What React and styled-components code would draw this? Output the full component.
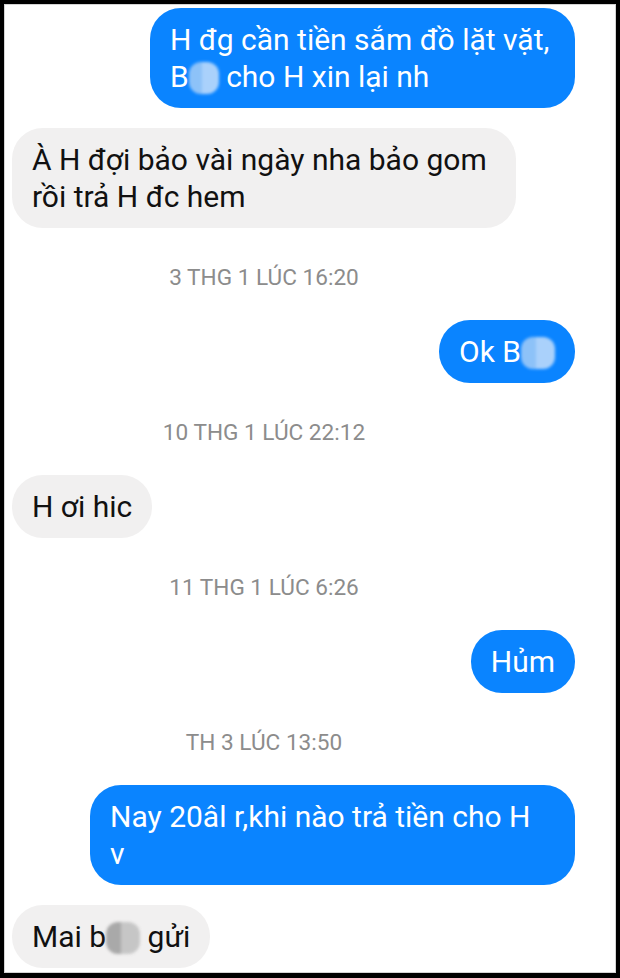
import React from "react";
import styled, { createGlobalStyle } from "styled-components";

const GlobalStyle = createGlobalStyle`
  html, body {
    margin: 0;
    padding: 0;
    background: #000;
  }
`;

const Frame = styled.div`
  width: 620px;
  height: 978px;
  box-sizing: border-box;
  background: #000;
  padding: 4px 4px 5px 4px;
`;

const Screen = styled.div`
  height: 100%;
  box-sizing: border-box;
  background: #fff;
  border: 1px solid #d4d4d4;
  overflow: hidden;
  display: flex;
  flex-direction: column;
  gap: 20px;
  padding: 3px 40px 0 7px;
  font-family: Roboto, "Noto Sans", sans-serif;
`;

const Row = styled.div`
  display: flex;
  justify-content: ${(p) => (p.$mine ? "flex-end" : "flex-start")};
`;

const Bubble = styled.div`
  box-sizing: border-box;
  width: ${(p) => (p.$w ? `${p.$w}px` : "auto")};
  background: ${(p) => (p.$mine ? "#0a84ff" : "#f1f0f0")};
  color: ${(p) => (p.$mine ? "#fff" : "#111")};
  font-size: 30px;
  line-height: 37px;
  padding: 13px 20px;
  border-radius: 31px;
  white-space: nowrap;
`;

const Stamp = styled.div`
  text-align: center;
  font-size: 22.6px;
  line-height: 26px;
  color: #8c8c8c;
  margin: 17px 59px 9px 0;
`;

const Censor = styled.span`
  display: inline-block;
  width: ${(p) => p.$w}px;
  height: 32px;
  vertical-align: -7px;
  border-radius: 12px;
  filter: blur(1.5px);
  background: ${(p) =>
    p.$mine
      ? "linear-gradient(90deg, #9cc9f8 0 45%, #bcdafb 45% 100%)"
      : "linear-gradient(90deg, #a2a2a2 0 45%, #c2c2c2 45% 100%)"};
  opacity: 0.9;
`;

function Message({ mine, w, children }) {
  return (
    <Row $mine={mine}>
      <Bubble $mine={mine} $w={w}>
        {children}
      </Bubble>
    </Row>
  );
}

export default function App() {
  return (
    <Frame>
      <GlobalStyle />
      <Screen>
        <Message mine w={425}>
          H đg cần tiền sắm đồ lặt vặt,
          <br />
          B<Censor $mine $w={30} /> cho H xin lại nh
        </Message>
        <Message w={504}>
          À H đợi bảo vài ngày nha bảo gom
          <br />
          rồi trả H đc hem
        </Message>
        <Stamp>3 THG 1 LÚC 16:20</Stamp>
        <Message mine>
          Ok B<Censor $mine $w={34} />
        </Message>
        <Stamp>10 THG 1 LÚC 22:12</Stamp>
        <Message>H ơi hic</Message>
        <Stamp>11 THG 1 LÚC 6:26</Stamp>
        <Message mine>Hủm</Message>
        <Stamp>TH 3 LÚC 13:50</Stamp>
        <Message mine w={485}>
          Nay 20âl r,khi nào trả tiền cho H
          <br />v
        </Message>
        <Message>
          Mai b<Censor $w={34} /> gửi
        </Message>
      </Screen>
    </Frame>
  );
}
